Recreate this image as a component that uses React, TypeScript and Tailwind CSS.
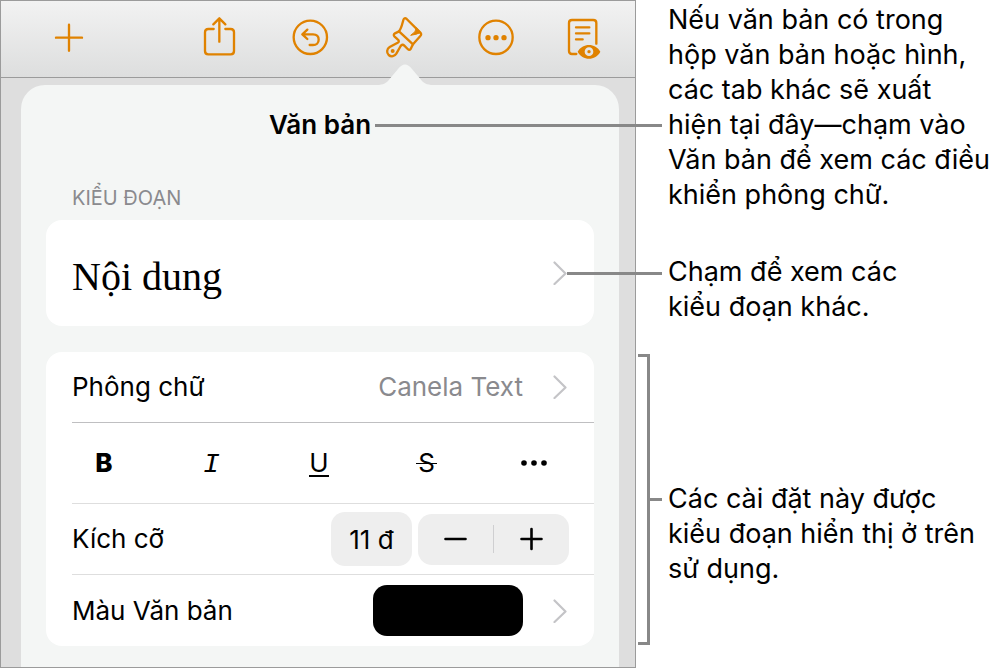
import { useState } from "react";

type IconProps = {
  viewBox: string;
  children: React.ReactNode;
};

// toolbar glyphs share one box and one stroke
const ToolIcon: React.FC<IconProps> = ({ viewBox, children }) => (
  <svg
    className="size-11"
    viewBox={viewBox}
    fill="none"
    stroke="currentColor"
    strokeWidth="7"
    strokeLinecap="round"
    strokeLinejoin="round"
    aria-hidden="true"
  >
    {children}
  </svg>
);

const Chevron: React.FC = () => (
  <svg
    className="h-6 w-3.5 shrink-0 text-[#c4c4c7]"
    viewBox="0 0 14 24"
    fill="none"
    stroke="currentColor"
    strokeWidth="2.2"
    strokeLinecap="round"
    strokeLinejoin="round"
    aria-hidden="true"
  >
    <path d="M1.5 1.5 12.5 12.5 1.5 23" />
  </svg>
);

const Toolbar: React.FC = () => (
  <div className="flex h-[77px] items-center border-b border-[#9b9b9b] bg-linear-to-b from-[#f2f2f2] to-[#dddede] pr-[25px] pl-[46px] text-[#e08200]">
    <button aria-label="Thêm">
      <ToolIcon viewBox="141 51 132 132">
        <path d="M207 74V152M168 113H246" />
      </ToolIcon>
    </button>
    <div className="ml-auto flex gap-12">
      <button aria-label="Chia sẻ">
        <ToolIcon viewBox="594 51 132 132">
          <path d="M658 125V56M640 73 658 55 676 73" />
          <path d="M641 87H625Q615 87 615 97V153Q615 163 625 163H692Q702 163 702 153V97Q702 87 692 87H676" />
        </ToolIcon>
      </button>
      <button aria-label="Hoàn tác">
        <ToolIcon viewBox="870 51 132 132">
          <circle cx="931" cy="112" r="50" />
          <path d="M922 89 907 103 922 117M908 103H939C950 103 956 109 956 119C956 129 949 135 939 135H929" />
        </ToolIcon>
      </button>
      <button aria-label="Định dạng">
        <ToolIcon viewBox="126 51 132 132">
          <path d="M177 94C184 86 186 75 190 60Q193 51 200 57L241 98Q246 103 241 108L219 133" />
          <path d="M177 94 165 100Q159 104 163 109L173 118Q180 124 173 128L149 141C140 147 139 158 146 165C154 172 164 169 169 161L182 138Q187 131 193 137L203 147Q208 152 212 147L219 133Z" />
          <path d="M229 84Q229 96 212 106Q228 104 241 98Z" fill="currentColor" strokeWidth="3" />
          <circle cx="158" cy="153" r="6" fill="currentColor" stroke="none" />
        </ToolIcon>
      </button>
      <button aria-label="Thêm tùy chọn">
        <ToolIcon viewBox="403 51 132 132">
          <circle cx="469" cy="112" r="50" />
          <g fill="currentColor" stroke="none">
            <circle cx="445" cy="113" r="8" />
            <circle cx="469" cy="113" r="8" />
            <circle cx="493" cy="113" r="8" />
          </g>
        </ToolIcon>
      </button>
      <button aria-label="Chế độ đọc">
        <ToolIcon viewBox="678 51 132 132">
          <path d="M769 131V69Q769 60 760 60H696Q687 60 687 69V153Q687 162 696 162H709" />
          <path d="M708 82H748M708 100H748M708 118H728" />
          <path
            d="M713 155C727 128 767 128 781 155C767 183 727 183 713 155ZM747 142A13 13 0 1 0 747 168A13 13 0 1 0 747 142Z"
            fill="currentColor"
            fillRule="evenodd"
            stroke="none"
          />
          <circle cx="747" cy="155" r="5" fill="currentColor" stroke="none" />
        </ToolIcon>
      </button>
    </div>
  </div>
);

const TextStyles: React.FC = () => (
  <div className="grid h-20 grid-cols-5 items-center pr-1.5 pl-1 text-[26px] leading-8">
    <button className="font-extrabold" aria-label="Đậm">
      B
    </button>
    <button className="pt-1 font-['Liberation_Mono',monospace] text-[28px] italic" aria-label="Nghiêng">
      I
    </button>
    <button aria-label="Gạch dưới">
      <span className="inline-block border-b-2 border-black leading-6">U</span>
    </button>
    <button aria-label="Gạch ngang">
      <span className="relative inline-block">
        S
        <span className="absolute inset-x-[-2px] top-1/2 h-px bg-black" />
      </span>
    </button>
    <button aria-label="Kiểu khác">
      <svg className="mx-auto h-1.5 w-[26px]" viewBox="0 0 26 6" aria-hidden="true">
        <circle cx="3" cy="3" r="2.8" />
        <circle cx="13" cy="3" r="2.8" />
        <circle cx="23" cy="3" r="2.8" />
      </svg>
    </button>
  </div>
);

const SizeRow: React.FC = () => {
  const [size, setSize] = useState(11);

  return (
    <div className="flex h-[70px] items-center pr-[25px] pl-[26px]">
      <label htmlFor="size">Kích cỡ</label>
      <input
        id="size"
        className="ml-auto h-[54px] w-[81px] rounded-[14px] bg-[#eee] text-center"
        value={`${size} đ`}
        readOnly
      />
      <div className="ml-1.5 flex h-[51px] w-[151px] items-center rounded-[14px] bg-[#eee]">
        <button className="flex-1" aria-label="Giảm" onClick={() => setSize(size - 1)}>
          <svg className="mx-auto size-6" viewBox="0 0 24 24" stroke="black" strokeWidth="2.6" strokeLinecap="round">
            <path d="M1.5 12H21.5" />
          </svg>
        </button>
        <span className="h-7 w-px bg-[#cfcfd1]" />
        <button className="flex-1" aria-label="Tăng" onClick={() => setSize(size + 1)}>
          <svg className="mx-auto size-6" viewBox="0 0 24 24" stroke="black" strokeWidth="2.6" strokeLinecap="round">
            <path d="M1.5 12H21.5M11.5 2V22" />
          </svg>
        </button>
      </div>
    </div>
  );
};

const Popover: React.FC = () => (
  <div className="relative mt-[7px] mr-4 ml-5 flex-1 rounded-t-[24px] bg-[#f4f6f5] px-[25px] pb-5">
    {/* pointer up to the format button */}
    <svg
      className="absolute right-[186px] bottom-full -mb-px h-[22px] w-14"
      viewBox="0 0 56 22"
      fill="#f4f6f5"
      aria-hidden="true"
    >
      <path d="M0 22V21C6 21 10 19 13 14.5L21 5Q28 -4 35 5L43 14.5C46 19 50 21 56 21V22Z" />
    </svg>

    <div className="-mx-[25px] grid grid-cols-[1fr_auto_1fr] items-center pt-6">
      <h1 className="col-start-2 text-[26px] leading-8 font-semibold">Văn bản</h1>
      <span className="-mr-[43px] ml-1 h-[3px] bg-[#888]" />
    </div>

    <h2 className="mt-[45px] mb-2.5 pl-[26px] text-xl leading-6 text-[#8a8a8e]">KIỂU ĐOẠN</h2>
    <button className="flex h-[106px] w-full items-center rounded-[16px] bg-white pl-[26px] text-left">
      <span className="flex-1 pt-2 font-['Liberation_Serif',serif] text-[40px] leading-12">Nội dung</span>
      <Chevron />
      <span className="-mr-[68px] h-[3px] w-[95px] bg-[#888]" />
    </button>

    <div className="mt-[26px] rounded-[16px] bg-white text-[26px] leading-8">
      <button className="flex h-[70px] w-full items-center pr-[27px] pl-[26px]">
        <span>Phông chữ</span>
        <span className="mr-[30px] ml-auto text-[#8a8a8e]">Canela Text</span>
        <Chevron />
      </button>
      <hr className="ml-[26px] border-[#bfbfc1]" />
      <TextStyles />
      <hr className="ml-[26px] border-[#dedede]" />
      <SizeRow />
      <hr className="ml-[26px] border-[#dedede]" />
      <button className="flex h-[71px] w-full items-center pr-[27px] pl-[26px]">
        <span>Màu Văn bản</span>
        <span className="mr-[30px] ml-auto h-[51px] w-[150px] rounded-[14px] bg-black" />
        <Chevron />
      </button>
    </div>
  </div>
);

const Callouts: React.FC = () => (
  <aside className="w-[367px] shrink-0 pt-0.5 text-[27px] leading-[35px] whitespace-nowrap">
    <p className="ml-8">
      Nếu văn bản có trong
      <br />
      hộp văn bản hoặc hình,
      <br />
      các tab khác sẽ xuất
      <br />
      hiện tại đây—chạm vào
      <br />
      Văn bản để xem các điều
      <br />
      khiển phông chữ.
    </p>
    <p className="mt-[42px] ml-8">
      Chạm để xem các
      <br />
      kiểu đoạn khác.
    </p>
    <div className="mt-[30px] ml-0.5 flex">
      <span className="h-[291px] w-3 border-y-[3px] border-r-[3px] border-[#888]" />
      <span className="h-[3px] w-3 self-center bg-[#888]" />
      <p className="mt-[127px] ml-1.5">
        Các cài đặt này được
        <br />
        kiểu đoạn hiển thị ở trên
        <br />
        sử dụng.
      </p>
    </div>
  </aside>
);

export default function App() {
  return (
    <div className="flex min-h-screen bg-white font-['Inter','Liberation_Sans',sans-serif] text-black">
      <main className="flex min-w-0 flex-1 flex-col border border-[#9b9b9b] bg-[#dedede]">
        <Toolbar />
        <Popover />
      </main>
      <Callouts />
    </div>
  );
}
